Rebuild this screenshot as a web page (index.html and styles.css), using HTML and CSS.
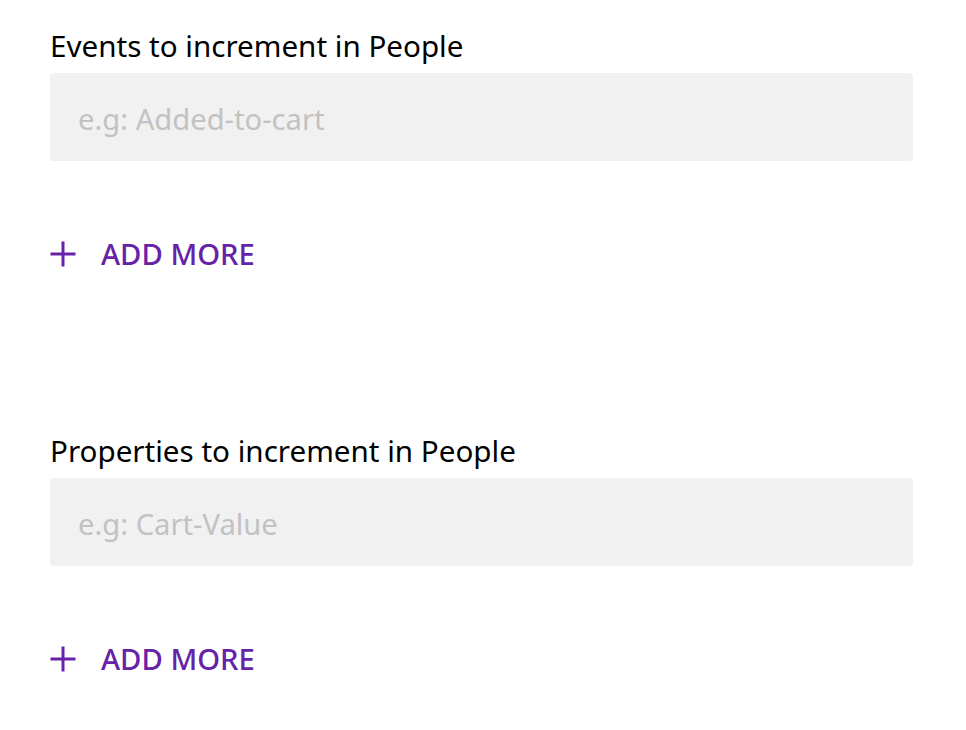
FILE: index.html
```html
<!DOCTYPE html>
<html>
<head>
<meta charset="utf-8">
<link rel="stylesheet" href="styles.css">
</head>
<body>
<div class="form">
  <section class="field">
    <label class="label">Events to increment in People</label>
    <div class="input"><span class="placeholder">e.g: Added-to-cart</span></div>
    <button class="add-more">
      <svg class="plus" width="26" height="26" viewBox="0 0 26 26"><path d="M13 0.5v25M0.5 13h25" stroke="#6622a8" stroke-width="3" fill="none"/></svg>
      <span>ADD MORE</span>
    </button>
  </section>
  <section class="field">
    <label class="label">Properties to increment in People</label>
    <div class="input"><span class="placeholder">e.g: Cart-Value</span></div>
    <button class="add-more">
      <svg class="plus" width="26" height="26" viewBox="0 0 26 26"><path d="M13 0.5v25M0.5 13h25" stroke="#6622a8" stroke-width="3" fill="none"/></svg>
      <span>ADD MORE</span>
    </button>
  </section>
</div>
</body>
</html>
```
FILE: styles.css
```css
html, body {
  margin: 0;
  padding: 0;
  background: #fff;
}
body {
  font-family: "Noto Sans", "Open Sans", sans-serif;
}
.form {
  padding: 26px 53px 0 50px;
  display: flex;
  flex-direction: column;
  gap: 157px;
}
.field {
  display: flex;
  flex-direction: column;
}
.label {
  font-size: 29.6px;
  line-height: 40px;
  color: #000;
  margin-bottom: 7px;
}
.input {
  height: 88px;
  box-sizing: border-box;
  background: #f1f1f1;
  border-radius: 3px;
  display: flex;
  align-items: center;
  padding: 4px 0 0 28px;
}
.placeholder {
  font-size: 29.2px;
  color: #c2c2c2;
}
.add-more {
  margin-top: 73px;
  display: flex;
  align-items: center;
  gap: 25px;
  background: none;
  border: 0;
  padding: 0;
  font-family: inherit;
  font-size: 29.2px;
  font-weight: 500;
  color: #6622a8;
  line-height: 40px;
  align-self: flex-start;
}
.plus {
  display: block;
}
```
